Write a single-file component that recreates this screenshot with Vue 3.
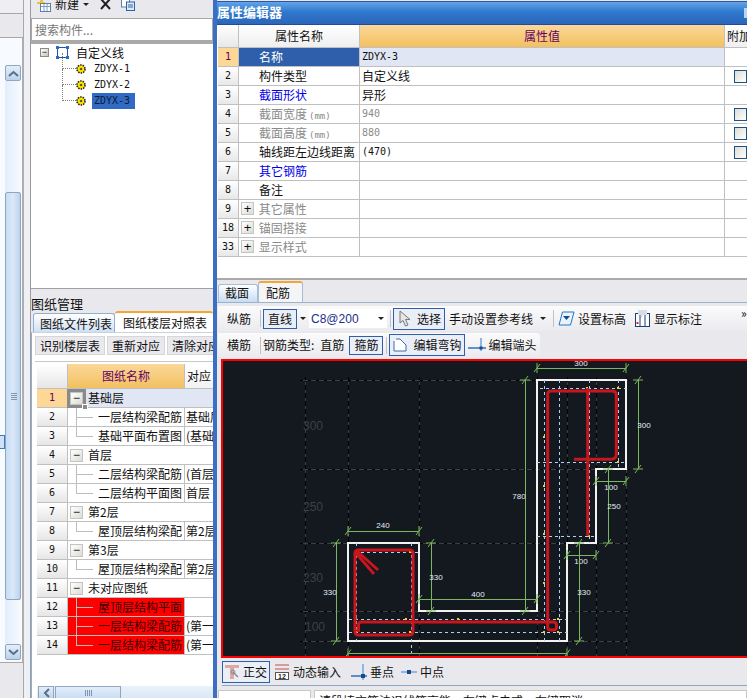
<script setup>
const treeItems = ['ZDYX-1', 'ZDYX-2', 'ZDYX-3']

const propRows = [
  { no: 1, name: '名称', value: 'ZDYX-3', mono: true, selected: true },
  { no: 2, name: '构件类型', value: '自定义线', check: true },
  { no: 3, name: '截面形状', value: '异形', tone: 'link' },
  { no: 4, name: '截面宽度', unit: '(mm)', value: '940', mono: true, tone: 'muted', check: true },
  { no: 5, name: '截面高度', unit: '(mm)', value: '880', mono: true, tone: 'muted', check: true },
  { no: 6, name: '轴线距左边线距离', value: '(470)', mono: true, check: true },
  { no: 7, name: '其它钢筋', value: '', tone: 'link' },
  { no: 8, name: '备注', value: '' },
  { no: 9, name: '其它属性', value: '', tone: 'muted', group: true },
  { no: 18, name: '锚固搭接', value: '', tone: 'muted', group: true },
  { no: 33, name: '显示样式', value: '', tone: 'muted', group: true },
]

const floorRows = [
  { no: 1, name: '基础层', group: true, selected: true },
  { no: 2, name: '一层结构梁配筋', floor: '基础层', line: 'mid' },
  { no: 3, name: '基础平面布置图', floor: '(基础层', line: 'end' },
  { no: 4, name: '首层', group: true },
  { no: 5, name: '二层结构梁配筋', floor: '(首层', line: 'mid' },
  { no: 6, name: '二层结构平面图', floor: '首层', line: 'end' },
  { no: 7, name: '第2层', group: true },
  { no: 8, name: '屋顶层结构梁配', floor: '第2层', line: 'end' },
  { no: 9, name: '第3层', group: true },
  { no: 10, name: '屋顶层结构梁配', floor: '第2层', line: 'end' },
  { no: 11, name: '未对应图纸', group: true },
  { no: 12, name: '屋顶层结构平面', floor: '', line: 'mid', missing: true },
  { no: 13, name: '一层结构梁配筋', floor: '(第一', line: 'mid', missing: true },
  { no: 14, name: '一层结构梁配筋', floor: '(第一', line: 'end', missing: true },
]

const gridX = [305.5, 348.5, 419.5, 537.5, 567.5, 596.5, 626.5]
const gridY = [380.5, 469.5, 543.5, 611.5, 641.5]

const axisLabels = [
  { text: '300', x: 303, y: 430 },
  { text: '250', x: 303, y: 511 },
  { text: '230', x: 303, y: 582 },
  { text: '100', x: 305, y: 631 },
]

const dims = [
  { x1: 348, y1: 531, x2: 419, y2: 531, text: '240', tx: 383, ty: 528 },
  { x1: 336, y1: 543, x2: 336, y2: 641, text: '330', tx: 330, ty: 595 },
  { x1: 431, y1: 543, x2: 431, y2: 611, text: '330', tx: 436, ty: 580 },
  { x1: 419, y1: 599, x2: 537, y2: 599, text: '400', tx: 478, ty: 597 },
  { x1: 348, y1: 653.5, x2: 567, y2: 653.5, text: '', tx: 0, ty: 0 },
  { x1: 537, y1: 368, x2: 626, y2: 368, text: '300', tx: 581, ty: 366 },
  { x1: 638, y1: 380, x2: 638, y2: 469, text: '300', tx: 644, ty: 428 },
  { x1: 525, y1: 380, x2: 525, y2: 611, text: '780', tx: 519, ty: 499 },
  { x1: 596, y1: 481, x2: 626, y2: 481, text: '100', tx: 611, ty: 490 },
  { x1: 608, y1: 469, x2: 608, y2: 543, text: '250', tx: 614, ty: 509 },
  { x1: 567, y1: 555, x2: 596, y2: 555, text: '100', tx: 581, ty: 564 },
  { x1: 579, y1: 543, x2: 579, y2: 641, text: '330', tx: 584, ty: 595 },
]

function dimTicks(d) {
  const ends = [[d.x1, d.y1], [d.x2, d.y2]]
  return ends
    .map(([x, y]) => {
      const cross = d.y1 === d.y2 ? `M${x} ${y - 5}L${x} ${y + 5}` : `M${x - 5} ${y}L${x + 5} ${y}`
      return `${cross}M${x - 3} ${y + 4}L${x + 3} ${y - 4}`
    })
    .join('')
}

const guides = [
  'M355 552H419', 'M349 619H567', 'M349 632H567', 'M540 388H626', 'M537 462H626', 'M537 536H596',
  'M356 543V641', 'M411 543V658', 'M544 380V641', 'M559 380V641', 'M589 380V543', 'M618 380V469',
]

const joints = [
  [356, 552], [410, 552], [356, 632], [410, 632], [356, 619], [406, 619], [458, 619],
  [544, 437], [544, 486], [544, 534], [544, 583], [544, 632], [558, 619], [558, 632],
  [587, 388], [618, 388], [618, 462], [589, 536],
]
</script>

<template>
  <div class="app">
    <aside class="rail">
      <div class="rail-tab short"></div>
      <div class="rail-tab tall"></div>
      <div class="rail-body">
        <div class="vscroll">
          <button class="scroll-btn"><svg width="11" height="7" viewBox="0 0 11 7"><path d="M1 6L5.500 2L10 6" fill="none" stroke="#54708e" stroke-width="2" /></svg></button>
          <div class="scroll-track top"></div>
          <div class="scroll-thumb"><span class="grip"></span></div>
          <div class="scroll-track"></div>
          <button class="scroll-btn"><svg width="11" height="7" viewBox="0 0 11 7"><path d="M1 1L5.500 5L10 1" fill="none" stroke="#54708e" stroke-width="2" /></svg></button>
        </div>
        <span class="edge-icon"></span>
      </div>
      <div class="rail-tab foot"></div>
    </aside>

    <section class="side">
      <div class="side-toolbar">
        <svg class="tool-icon" width="15" height="14" viewBox="0 0 15 14">
          <path d="M0 3H3V0H6V3H8V5H6V7H3V5H0Z" fill="#f1c232" />
          <rect x="3.500" y="4.500" width="10" height="8" fill="#fff" stroke="#5a7fa8" />
          <path d="M4 7.500H13M7 5V12M10 5V12" stroke="#7c9cc0" />
        </svg>
        <span class="new-label">新建</span>
        <i class="caret"></i>
        <svg class="del-icon" width="11" height="11" viewBox="0 0 11 11"><path d="M1 0L10 10M10 0L1 10" stroke="#222" stroke-width="2" /></svg>
        <svg class="copy-icon" width="14" height="12" viewBox="0 0 14 12">
          <rect x="0.500" y="0" width="8" height="8" fill="#fff" stroke="#5a7fa8" />
          <rect x="5.500" y="3" width="8" height="8.500" fill="#dfe9f6" stroke="#2f63a8" />
          <path d="M7 6H12M7 8H12" stroke="#2f63a8" />
        </svg>
      </div>
      <div class="search">搜索构件...</div>
      <div class="tree">
        <div class="tree-root">
          <span class="tree-toggle">−</span>
          <svg width="13" height="13" viewBox="0 0 13 13">
            <rect x="1.500" y="1.500" width="10" height="10" fill="none" stroke="#1c55b8" />
            <path d="M0 0h3v3H0zM10 0h3v3h-3zM0 10h3v3H0zM10 10h3v3h-3z" fill="#2a6ad0" />
          </svg>
          <span class="tree-root-label">自定义线</span>
        </div>
        <div class="tree-items">
          <div v-for="(item, i) in treeItems" :key="item" class="tree-item">
            <svg width="10" height="10" viewBox="0 0 10 10">
              <circle cx="5" cy="5" r="4" fill="#ffe600" stroke="#222" stroke-dasharray="1.500 1" stroke-width="1.600" />
              <circle cx="5" cy="5" r="1.300" fill="#6b5a00" />
            </svg>
            <span class="tree-item-label" :class="{ active: i === 2 }">{{ item }}</span>
          </div>
        </div>
      </div>

      <div class="side-title">图纸管理</div>
      <div class="side-tabs">
        <span class="side-tab">图纸文件列表</span>
        <span class="side-tab current">图纸楼层对照表</span>
      </div>
      <div class="side-panel">
        <div class="side-actions">
          <button>识别楼层表</button>
          <button>重新对应</button>
          <button>清除对应</button>
        </div>
        <div class="floor-grid">
          <div class="floor-row head">
            <span class="row-no"></span>
            <span class="floor-name">图纸名称</span>
            <span class="floor-col">对应</span>
          </div>
          <div
            v-for="row in floorRows"
            :key="row.no"
            class="floor-row"
            :class="{ selected: row.selected, missing: row.missing }"
          >
            <span class="row-no">{{ row.no }}</span>
            <template v-if="row.group">
              <span class="floor-group">
                <span class="box-toggle" :class="{ focused: row.selected }">−</span>
                {{ row.name }}
              </span>
            </template>
            <template v-else>
              <span class="floor-name" :class="'line-' + row.line">{{ row.name }}</span>
              <span class="floor-col">{{ row.floor }}</span>
            </template>
          </div>
        </div>
        <div class="hscroll">
          <button class="hscroll-btn"><svg width="7" height="10" viewBox="0 0 7 10"><path d="M6 1L2 5L6 9" fill="none" stroke="#54708e" stroke-width="2" /></svg></button>
          <div class="hscroll-thumb"><span class="hgrip"></span></div>
        </div>
      </div>
    </section>

    <section class="editor">
      <header class="editor-title">属性编辑器<span class="title-btn"></span></header>
      <div class="prop-grid">
        <div class="prop-row head">
          <span class="prop-no"></span>
          <span class="prop-name">属性名称</span>
          <span class="prop-value">属性值</span>
          <span class="prop-extra">附加</span>
        </div>
        <div v-for="row in propRows" :key="row.no" class="prop-row" :class="{ selected: row.selected }">
          <span class="prop-no">{{ row.no }}</span>
          <span class="prop-name" :class="row.tone">
            <span v-if="row.group" class="plus-box">+</span>
            {{ row.name }}<small v-if="row.unit">{{ row.unit }}</small>
          </span>
          <span class="prop-value" :class="[row.tone === 'muted' ? 'muted' : '', { mono: row.mono }]">{{ row.value }}</span>
          <span class="prop-extra"><i v-if="row.check" class="check"></i></span>
        </div>
      </div>
      <div class="editor-blank"></div>

      <div class="editor-tabs">
        <span class="editor-tab">截面</span>
        <span class="editor-tab current">配筋</span>
      </div>

      <div class="tool-row first">
        <span class="tool-label">纵筋</span>
        <i class="sep"></i>
        <span class="tool-btn boxed line-btn">直线</span>
        <i class="caret"></i>
        <span class="combo">C8@200<i class="caret"></i></span>
        <i class="sep tight"></i>
        <span class="tool-btn boxed select-btn">
          <svg width="13" height="17" viewBox="0 0 13 17"><path d="M1 1V13L4 10.500L6.500 16L9 15L6.500 9.500H11Z" fill="#e6e6e6" stroke="#777" /></svg>
          选择
        </span>
        <span class="plain ref-line">手动设置参考线</span>
        <i class="caret ref-caret"></i>
        <i class="sep gap"></i>
        <svg class="level-icon" width="17" height="15" viewBox="0 0 17 15">
          <path d="M4.500 1H16L12.500 14H1Z" fill="#eaf3fb" stroke="#1f78c8" />
          <path d="M5 5H12L8.500 9Z" fill="#174a8c" />
        </svg>
        <span class="plain">设置标高</span>
        <svg class="mark-icon" width="15" height="17" viewBox="0 0 15 17">
          <rect x="0.500" y="3.500" width="14" height="13" fill="#fff" stroke="#1b3f74" />
          <path d="M5 4V16M10 4V16" stroke="#1b3f74" />
          <path d="M3 0H12V5H8L6 9V5H3Z" fill="#d8dde3" />
          <rect x="1.500" y="12" width="2" height="2" fill="#e02020" />
        </svg>
        <span class="plain">显示标注</span>
        <span class="more">»</span>
      </div>

      <div class="tool-row second">
        <span class="tool-label">横筋</span>
        <i class="sep"></i>
        <span class="plain type-label">钢筋类型:</span>
        <span class="plain straight">直筋</span>
        <span class="tool-btn boxed stirrup-btn">箍筋</span>
        <i class="sep tight"></i>
        <span class="tool-btn boxed hook-btn">
          <svg width="15" height="14" viewBox="0 0 15 14"><path d="M1 3V13H13V7L9 3L7 1H3" fill="#fff" stroke="#3d6bb0" /></svg>
          编辑弯钩
        </span>
        <svg class="end-icon" width="18" height="14" viewBox="0 0 18 14"><path d="M0 10H18" stroke="#2f6fc0" stroke-width="1.500" /><path d="M13 0V13" stroke="#8fb7e2" stroke-width="2" /><rect x="11.500" y="8.500" width="3" height="3" fill="#174a8c" /></svg>
        <span class="plain">编辑端头</span>
      </div>

      <div class="canvas">
        <svg width="524" height="295" viewBox="223 361 524 295">
          <g shape-rendering="crispEdges">
            <g v-for="x in gridX" :key="'v' + x">
              <path :d="`M${x} 377V658`" stroke="#3a3f48" />
              <path :d="`M${x} 377V658`" stroke="#000" stroke-dasharray="5 3" />
            </g>
            <g v-for="y in gridY" :key="'h' + y">
              <path :d="`M300 ${y}H630`" stroke="#3a3f48" />
              <path :d="`M300 ${y}H630`" stroke="#000" stroke-dasharray="3 5" />
            </g>
          </g>
          <text v-for="a in axisLabels" :key="a.y" :x="a.x" :y="a.y" class="axis-text">{{ a.text }}</text>

          <path
            d="M348 543H419V611H537V380H626V469H596V543H567V641H348Z"
            fill="none"
            stroke="#f2f2f2"
            stroke-width="2"
            shape-rendering="crispEdges"
          />
          <path v-for="g in guides" :key="g" :d="g" stroke="#a9d3f7" stroke-dasharray="3 3" fill="none" shape-rendering="crispEdges" />
          <rect v-for="j in joints" :key="j.join()" :x="j[0] - 1" :y="j[1] - 1" width="2" height="2" fill="#ffd21a" />

          <g fill="none" stroke="#c8161e" stroke-width="3">
            <rect x="355" y="550" width="58" height="85" rx="3" />
            <path d="M355 552L374 574M357 551L378 570" />
            <path d="M358.500 632V625Q358.500 622 361 622H553Q556.500 622 556.500 625V627Q556.500 630 553 630H551Q547.700 630 547.700 627V394Q547.700 391 551 391H612Q616.300 391 616.300 395V454Q616.300 459.300 611 459.300H574" />
            <path d="M587.700 388V535.700" />
          </g>

          <g v-for="d in dims" :key="d.x1 + '-' + d.y1">
            <path :d="`M${d.x1} ${d.y1}L${d.x2} ${d.y2}`" stroke="#7ab85f" fill="none" shape-rendering="crispEdges" />
            <path :d="dimTicks(d)" stroke="#7ab85f" fill="none" />
            <text v-if="d.text" :x="d.tx" :y="d.ty" class="dim-text">{{ d.text }}</text>
          </g>
        </svg>
      </div>

      <div class="snap-bar">
        <span class="snap boxed">
          <svg width="15" height="15" viewBox="0 0 15 15"><path d="M0 1H14V4H9V15H5V4H0Z" fill="#e0a8a4" /><path d="M8 8L13 13" stroke="#8c8c8c" stroke-width="1.500" /><circle cx="8" cy="8" r="2" fill="none" stroke="#8c8c8c" /></svg>
          正交
        </span>
        <span class="snap">
          <svg width="16" height="16" viewBox="0 0 16 16"><path d="M1 1H15M1 5H15" stroke="#c0504d" /><rect x="1.500" y="8.500" width="13" height="7" fill="#fff" stroke="#555" /><text x="4" y="15" class="icon-text">12</text></svg>
          动态输入
        </span>
        <span class="snap wide">
          <svg width="16" height="16" viewBox="0 0 16 16"><path d="M12 0V16" stroke="#8fb7e2" stroke-width="2" /><path d="M0 12H16" stroke="#2f6fc0" stroke-width="1.500" /><rect x="10" y="10" width="4" height="4" fill="#174a8c" /></svg>
          垂点
        </span>
        <span class="snap">
          <svg width="16" height="10" viewBox="0 0 16 10"><path d="M0 5H16" stroke="#8fb7e2" stroke-width="2" /><rect x="6" y="3" width="4" height="4" fill="#174a8c" /></svg>
          中点
        </span>
      </div>

      <div class="status">
        <span class="status-left"></span>
        <span class="status-right">请段填充筋法退线箱高能：左键点击或，右键取消</span>
      </div>
    </section>
  </div>
</template>

<style>
html,
body {
  margin: 0;
  background: #e9e8ed;
}
</style>

<style scoped>
.app {
  display: flex;
  width: 747px;
  height: 698px;
  overflow: hidden;
  background: #e9e8ed;
  color: #111;
  font: 12px/16px "Noto Sans CJK SC", "Liberation Sans", sans-serif;
}

button {
  font: inherit;
  color: inherit;
  padding: 0;
}

/* left rail with the long scrollbar */
.rail {
  flex: 0 0 30px;
  box-sizing: border-box;
  padding-right: 6px;
  background: #eef0f6;
}

.rail-tab {
  box-sizing: border-box;
  border-right: 1px solid #a8a8a8;
  border-bottom: 1px solid #a8a8a8;
  background: #e9e8ed;
}

.rail-tab.short {
  height: 14px;
  background: #efeff3;
}

.rail-tab.tall {
  height: 24px;
}

.rail-tab.foot {
  height: 36px;
  border-top: 1px solid #a8a8a8;
  border-bottom: 0;
}

.rail-body {
  position: relative;
  box-sizing: border-box;
  height: 624px;
  padding: 27px 0 0 5px;
  border-right: 2px solid #aeaeae;
  background: #f7faff;
}

.edge-icon {
  position: absolute;
  left: 0;
  top: 397px;
  width: 5px;
  height: 14px;
  background: #cfe2f6;
  border: 1px solid #3a78c0;
  border-left: 0;
  box-sizing: border-box;
}

.vscroll {
  display: flex;
  flex-direction: column;
  width: 16px;
  height: 595px;
}

.scroll-btn {
  display: flex;
  align-items: center;
  justify-content: center;
  flex: 0 0 16px;
  box-sizing: border-box;
  border: 1px solid #8ea6bf;
  border-radius: 2px;
  background: linear-gradient(#e4eef9, #bcd2ea);
}

.scroll-track {
  flex: 1;
  background: linear-gradient(90deg, #e2edfb, #f7faff);
}

.scroll-track.top {
  flex: 0 0 111px;
}

.scroll-thumb {
  position: relative;
  flex: 0 0 408px;
  box-sizing: border-box;
  border: 1px solid #8ea6bf;
  border-radius: 2px;
  background: linear-gradient(90deg, #c6dcf4, #dce9f8 50%, #bcd2ea);
}

.grip {
  position: absolute;
  left: 5px;
  top: 200px;
  width: 6px;
  height: 7px;
  background: repeating-linear-gradient(#7f96ae 0 1px, transparent 1px 2px);
}

/* left panel */
.side {
  display: flex;
  flex-direction: column;
  flex: 0 0 183px;
  box-sizing: border-box;
  width: 183px;
  border-left: 1px solid #9c9c9c;
  overflow: hidden;
}

.side > * {
  flex-shrink: 0;
}

.side-toolbar {
  display: flex;
  align-items: flex-start;
  height: 18px;
  padding-left: 6px;
  overflow: hidden;
}

.tool-icon {
  margin-top: -1px;
}

.new-label {
  margin: -4px 0 0 3px;
  font-size: 12px;
}

.side-toolbar .caret {
  margin: 3px 0 0 4px;
}

.del-icon {
  margin: -1px 0 0 11px;
}

.copy-icon {
  margin: -1px 0 0 10px;
}

.caret {
  display: inline-block;
  flex: none;
  width: 0;
  height: 0;
  border: 3px solid transparent;
  border-top: 3px solid #222;
  border-bottom: 0;
}

.search {
  box-sizing: border-box;
  height: 23px;
  padding: 3px 3px;
  border: 1px solid #a8a8a8;
  background: #fff;
  color: #777;
}

.tree {
  box-sizing: border-box;
  flex: 0 0 248px;
  padding: 0 0 0 9px;
  border-top: 3px solid #aaa;
  border-bottom: 1px solid #a0a0a0;
  background: #fff;
}

.tree-root {
  display: flex;
  align-items: center;
  height: 17px;
}

.tree-toggle {
  display: flex;
  align-items: center;
  justify-content: center;
  box-sizing: border-box;
  width: 9px;
  height: 9px;
  margin-right: 7px;
  border: 1px solid #8a8a8a;
  background: linear-gradient(135deg, #fff, #c8c4b8);
  font: 9px/1 "Liberation Sans", sans-serif;
}

.tree-root-label {
  margin-left: 7px;
}

.tree-items {
  margin-left: 36px;
}

.tree-item {
  position: relative;
  display: flex;
  align-items: center;
  height: 16px;
}

.tree-item::before {
  content: "";
  position: absolute;
  left: -14px;
  top: -8px;
  width: 13px;
  height: 15px;
  border-left: 1px dotted #808080;
  border-bottom: 1px dotted #808080;
}

.tree-item-label {
  margin-left: 6px;
  padding: 0 5px 0 2px;
  font: 10px/16px "DejaVu Sans Mono", monospace;
}

.tree-item-label.active {
  background: #316ac5;
  color: #0b1a33;
}

.side-title {
  height: 17px;
  margin-top: 6px;
  font-size: 13px;
  line-height: 17px;
}

.side-tabs {
  display: flex;
  align-items: flex-end;
  height: 20px;
  padding-left: 2px;
}

.side-tab {
  box-sizing: border-box;
  height: 19px;
  padding: 2px 0 0 6px;
  width: 82px;
  border: 1px solid #8fb0d0;
  border-bottom: 0;
  border-radius: 3px 3px 0 0;
  background: linear-gradient(#fff, #cfe0f3);
}

.side-tab.current {
  flex: 1;
  height: 21px;
  padding-left: 8px;
  border: 0;
  border-top: 2px solid #f2a830;
  background: #fff;
  white-space: nowrap;
}

.side-panel {
  flex: 1 1 0;
  min-height: 0;
  border-left: 1px solid #8fb0d0;
  border-top: 1px solid #c6d4e2;
  background: #fff;
}

.side-actions {
  display: flex;
  gap: 2px;
  height: 19px;
  margin: 3px 0 0 3px;
  padding-bottom: 6px;
  border-bottom: 1px solid #c8c8c8;
}

.side-actions button {
  flex: none;
  box-sizing: border-box;
  height: 19px;
  padding: 0 4px;
  border: 1px solid #d6d6d6;
  background: #e9e8ed;
  white-space: nowrap;
}

.floor-grid {
  margin: 2px 0 0 5px;
  height: 322px;
}

.floor-row {
  display: grid;
  grid-template-columns: 31px 117px 40px;
  box-sizing: border-box;
  height: 19px;
  border-bottom: 1px solid #c0c0c0;
  line-height: 18px;
}

.floor-row.head {
  height: 25px;
  line-height: 24px;
}

.floor-row > span {
  box-sizing: border-box;
  border-right: 1px solid #c0c0c0;
  white-space: nowrap;
  overflow: hidden;
}

.row-no {
  background: linear-gradient(#fff, #e6e6e6);
  text-align: center;
  font: 10px/18px "DejaVu Sans Mono", monospace;
}

.head .floor-name {
  background: linear-gradient(#fbd898, #f2c060);
  color: #660066;
  text-align: center;
  padding: 0;
}

.head .floor-col {
  padding-left: 2px;
  background: linear-gradient(#fff, #f2f2f2);
}

.floor-name {
  position: relative;
  padding-left: 30px;
}

.floor-name::before {
  content: "";
  position: absolute;
  left: 8px;
  top: -1px;
  width: 16px;
  height: 10px;
  border-left: 1px solid #bdbdbd;
  border-bottom: 1px solid #bdbdbd;
}

.head .floor-name::before {
  display: none;
}

.floor-name.line-mid::after {
  content: "";
  position: absolute;
  left: 8px;
  top: 9px;
  height: 10px;
  border-left: 1px solid #bdbdbd;
}

.floor-col {
  padding-left: 1px;
}

.floor-row > .floor-group {
  display: flex;
  align-items: center;
  grid-column: 2 / 4;
  gap: 5px;
  padding-left: 2px;
  border-right: 0;
  overflow: visible;
}

.selected .row-no {
  background: #fdd795;
  color: #660066;
}

.selected .floor-group {
  background: #e0e6f3;
}

.box-toggle {
  position: relative;
  display: flex;
  flex: none;
  align-items: center;
  justify-content: center;
  box-sizing: border-box;
  width: 13px;
  height: 13px;
  border: 1px solid #c4c4c4;
  background: linear-gradient(135deg, #fff, #dcdcd4);
  font: 12px/1 "Liberation Sans", sans-serif;
}

.box-toggle.focused {
  outline: 3px solid #8a8a8a;
}

.box-toggle.focused::after {
  content: "";
  position: absolute;
  right: -6px;
  bottom: -6px;
  width: 4px;
  height: 4px;
  background: #8a8a8a;
  border: 1px solid #fff;
}

.missing .floor-name {
  background: #f00;
  color: #3a0000;
}

.hscroll {
  display: flex;
  height: 13px;
  margin-left: 5px;
  background: linear-gradient(#eaf2fb, #d8e6f6);
}

.hscroll-btn {
  display: flex;
  align-items: center;
  justify-content: center;
  box-sizing: border-box;
  width: 16px;
  margin-left: 1px;
  border: 1px solid #8ea6bf;
  border-bottom: 0;
  background: linear-gradient(#e4eef9, #bcd2ea);
}

.hscroll-thumb {
  display: flex;
  align-items: center;
  justify-content: center;
  box-sizing: border-box;
  width: 66px;
  margin-left: 1px;
  border: 1px solid #8ea6bf;
  border-bottom: 0;
  background: linear-gradient(#e4eef9, #c6dcf4);
}

.hgrip {
  width: 7px;
  height: 6px;
  background: repeating-linear-gradient(90deg, #7f96ae 0 1px, transparent 1px 2px);
}

/* property editor window */
.editor {
  display: flex;
  flex-direction: column;
  flex: 1;
  min-width: 0;
  box-sizing: border-box;
  border-left: 4px solid #3c6fc4;
  background: #e9e8ed;
  overflow: hidden;
}

.editor > * {
  flex-shrink: 0;
}

.editor-title {
  position: relative;
  box-sizing: border-box;
  height: 24px;
  margin-top: 1px;
  padding: 2px 0 0 0;
  border-top: 1px solid #2c55a6;
  border-bottom: 1px solid #24499a;
  background: linear-gradient(#63a4ea, #2f78cc 45%, #2a66bc);
  color: #fff;
  font-weight: 700;
  font-size: 13px;
}

.title-btn {
  position: absolute;
  right: 0;
  top: 6px;
  width: 3px;
  height: 10px;
  background: #bcd4f0;
}

.prop-grid {
  padding-left: 1px;
  background: #fff;
  overflow: hidden;
}

.prop-row {
  display: grid;
  grid-template-columns: 21px 121px 365px 60px;
  box-sizing: border-box;
  height: 19px;
  border-bottom: 1px solid #c0c0c0;
  line-height: 18px;
}

.prop-row.head {
  height: 23px;
  line-height: 22px;
}

.prop-row > span {
  box-sizing: border-box;
  border-right: 1px solid #c0c0c0;
  white-space: nowrap;
}

.prop-no {
  background: linear-gradient(#fff, #e8e8e8);
  text-align: center;
  font: 10px/18px "DejaVu Sans Mono", monospace;
}

.prop-name {
  padding-left: 20px;
}

.prop-name small {
  font: 9px "DejaVu Sans Mono", monospace;
  margin-left: 2px;
}

.prop-value {
  padding-left: 2px;
}

.prop-extra {
  position: relative;
  padding-left: 2px;
}

.head .prop-name {
  padding: 0;
  text-align: center;
  background: linear-gradient(#fff, #efefef);
}

.head .prop-value {
  padding: 0;
  text-align: center;
  background: linear-gradient(#fbd898, #f2c060);
  color: #660066;
}

.head .prop-extra {
  background: linear-gradient(#fff, #efefef);
}

.selected .prop-no {
  background: #fdd795;
  color: #660066;
}

.selected .prop-name {
  background: #2f5faa;
  color: #fff;
}

.selected .prop-value {
  background: #e0e6f3;
}

.link {
  color: #0000e6;
}

.muted {
  color: #8a8a8a;
}

.mono {
  font: 10px/18px "DejaVu Sans Mono", monospace;
}

.plus-box {
  display: inline-flex;
  align-items: center;
  justify-content: center;
  box-sizing: border-box;
  width: 13px;
  height: 13px;
  margin: 2px 2px 0 -18px;
  vertical-align: top;
  border: 1px solid #c4c4c4;
  background: linear-gradient(135deg, #fff, #dcdcd4);
  color: #111;
  font: 13px/1 "Liberation Sans", sans-serif;
}

.check {
  position: absolute;
  left: 9px;
  top: 3px;
  box-sizing: border-box;
  width: 13px;
  height: 13px;
  border: 1px solid #1c5180;
  background: linear-gradient(135deg, #dcdcd7, #fff);
}

.editor-blank {
  flex: 0 0 23px;
  box-sizing: border-box;
  border-bottom: 2px solid #aaa;
  background: #fff;
}

.editor-tabs {
  display: flex;
  align-items: flex-end;
  flex: 0 0 23px;
  box-sizing: border-box;
  padding-left: 1px;
  border-bottom: 1px solid #9db3c9;
}

.editor-tab {
  box-sizing: border-box;
  width: 40px;
  height: 18px;
  padding-left: 6px;
  border: 1px solid #a9bdd2;
  border-bottom: 0;
  border-radius: 3px 3px 0 0;
  background: linear-gradient(#fff, #c6dcf4);
  font-size: 12px;
}

.editor-tab.current {
  width: 45px;
  height: 21px;
  padding: 2px 0 0 7px;
  border-top: 2px solid #f2a830;
  background: #f5f5f8;
}

.tool-row {
  display: flex;
  align-items: center;
  box-sizing: border-box;
  margin-left: 1px;
  background: linear-gradient(#fbfbfc, #ebebef);
}

.tool-row.first {
  height: 25px;
  margin-top: 3px;
}

.tool-row.second {
  width: 322px;
  height: 24px;
  margin-top: 2px;
  border-radius: 0 4px 4px 0;
}

.tool-label {
  flex: none;
  margin-left: 9px;
}

.sep {
  flex: none;
  width: 1px;
  height: 17px;
  margin: 0 2px 0 9px;
  background: #c0c0c8;
}

.sep.tight {
  margin: 0 2px 0 3px;
}

.sep.gap {
  margin: 0 4px 0 7px;
}

.tool-btn {
  display: flex;
  align-items: center;
  flex: none;
  height: 20px;
  box-sizing: border-box;
}

.boxed {
  border: 1px solid #2f5faa;
  background: #e9eef7;
}

.line-btn {
  padding: 0 4px;
}

.first > .caret {
  margin: 0 3px;
}

.first > .ref-caret {
  margin: 0 0 0 7px;
}

.combo {
  position: relative;
  display: flex;
  flex: none;
  align-items: center;
  box-sizing: border-box;
  width: 78px;
  height: 19px;
  padding-left: 2px;
  background: #fff;
  color: #1c2f8c;
  font: 12px "Liberation Sans", sans-serif;
}

.combo .caret {
  position: absolute;
  right: 3px;
  top: 8px;
}

.select-btn {
  gap: 5px;
  height: 22px;
  padding: 0 3px 0 5px;
}

.plain {
  flex: none;
}

.ref-line {
  margin-left: 4px;
}

.level-icon {
  flex: none;
  margin-right: 3px;
}

.mark-icon {
  flex: none;
  margin: 0 4px 0 9px;
}

.more {
  flex: none;
  align-self: flex-start;
  margin-left: 39px;
  font-size: 12px;
  line-height: 14px;
}

.type-label {
  margin-right: 6px;
}

.straight {
  margin-right: 5px;
}

.stirrup-btn {
  padding: 0 4px;
  height: 19px;
}

.hook-btn {
  gap: 5px;
  height: 22px;
  padding: 0 3px;
}

.end-icon {
  flex: none;
  margin: 0 2px 0 3px;
}

.canvas {
  box-sizing: border-box;
  height: 299px;
  margin: 2px 0 0 4px;
  border: 2px solid #f00;
  border-right: 0;
  background: #14181f;
}

.canvas svg {
  display: block;
}

.axis-text {
  fill: #3b4049;
  font: 12px "Liberation Sans", sans-serif;
}

.dim-text {
  fill: #e2ecf7;
  font: 8px "Liberation Sans", sans-serif;
  text-anchor: middle;
}

.icon-text {
  fill: #222;
  font: 700 7px "Liberation Sans", sans-serif;
}

.snap-bar {
  display: flex;
  align-items: center;
  gap: 4px;
  height: 28px;
  margin-left: 5px;
  box-sizing: border-box;
  border-bottom: 1px solid #8fa8c4;
}

.snap {
  display: flex;
  align-items: center;
  flex: none;
  gap: 3px;
  height: 22px;
  box-sizing: border-box;
}

.snap.boxed {
  padding: 0 2px;
}

.snap.wide {
  margin-left: 6px;
  margin-right: 3px;
}

.status {
  display: flex;
  flex: 1 1 0;
  min-height: 0;
  gap: 3px;
  margin-top: 4px;
  padding-left: 1px;
  overflow: hidden;
}

.status-left {
  flex: 0 0 93px;
  height: 20px;
  box-sizing: border-box;
  border: 1px solid #c8c8c8;
  background: #fff;
}

.status-right {
  flex: 1;
  height: 20px;
  box-sizing: border-box;
  padding: 2px 0 0 4px;
  border: 1px solid #c8c8c8;
  background: #fff;
  white-space: nowrap;
}
</style>
